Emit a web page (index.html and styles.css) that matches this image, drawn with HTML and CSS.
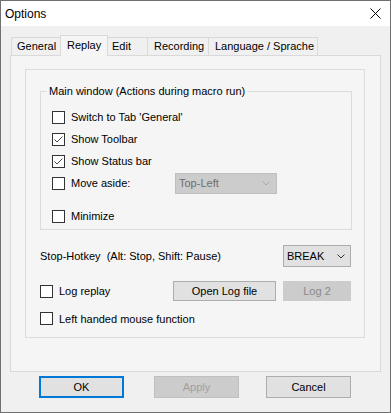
FILE: index.html
```html
<!DOCTYPE html>
<html>
<head>
<meta charset="utf-8">
<title>Options</title>
<link rel="stylesheet" href="styles.css">
</head>
<body>
<div class="window">
  <div class="titlebar">
    <span class="title">Options</span>
    <span class="close"><svg width="11" height="11" viewBox="0 0 11 11"><path d="M0.5 0.5L10.5 10.5M10.5 0.5L0.5 10.5" stroke="#000" stroke-width="1" fill="none"/></svg></span>
  </div>
  <div class="body">
    <div class="tabs">
      <div class="tab t-general">General</div>
      <div class="tab active t-replay">Replay</div>
      <div class="tab t-edit">Edit</div>
      <div class="tab t-rec">Recording</div>
      <div class="tab t-lang">Language / Sprache</div>
    </div>
    <div class="panel">
      <div class="frame">
        <fieldset class="group">
          <legend>Main window (Actions during macro run)</legend>
          <div class="rows">
            <div class="row"><span class="cb"></span><span class="lbl">Switch to Tab 'General'</span></div>
            <div class="row"><span class="cb"><svg width="11" height="11" viewBox="0 0 11 11"><path d="M1.5 5.5L4 8L9.5 2.5" stroke="#4d4d4d" stroke-width="1" fill="none"/></svg></span><span class="lbl">Show Toolbar</span></div>
            <div class="row"><span class="cb"><svg width="11" height="11" viewBox="0 0 11 11"><path d="M1.5 5.5L4 8L9.5 2.5" stroke="#4d4d4d" stroke-width="1" fill="none"/></svg></span><span class="lbl">Show Status bar</span></div>
            <div class="row"><span class="cb"></span><span class="lbl lbl-move">Move aside:</span>
              <div class="combo combo-disabled"><span>Top-Left</span><svg width="8" height="5" viewBox="0 0 8 5"><polyline points="0.5,0.5 4,4 7.5,0.5" stroke="#a8a8a8" fill="none"/></svg></div>
            </div>
            <div class="row row-min"><span class="cb"></span><span class="lbl">Minimize</span></div>
          </div>
        </fieldset>
        <div class="hotkey">
          <span class="lbl">Stop-Hotkey&nbsp; (Alt: Stop, Shift: Pause)</span>
          <div class="combo combo-break"><span>BREAK</span><svg width="8" height="5" viewBox="0 0 8 5"><polyline points="0.5,0.5 4,4 7.5,0.5" stroke="#333" fill="none"/></svg></div>
        </div>
        <div class="logrow">
          <span class="cb"></span><span class="lbl">Log replay</span>
          <div class="logbtns">
            <div class="btn btn-open">Open Log file</div>
            <div class="btn btn-disabled btn-log2">Log 2</div>
          </div>
        </div>
        <div class="lefthand">
          <span class="cb"></span><span class="lbl">Left handed mouse function</span>
        </div>
      </div>
    </div>
    <div class="actions">
      <div class="btn dlg btn-ok">OK</div>
      <div class="btn dlg btn-disabled btn-apply">Apply</div>
      <div class="btn dlg btn-cancel">Cancel</div>
    </div>
  </div>
</div>
</body>
</html>
```
FILE: styles.css
```css
html, body {
  margin: 0;
  padding: 0;
  background: #f0f0f0;
}
body {
  font-family: "Liberation Sans", Arial, sans-serif;
  font-size: 11px;
  color: #000;
}
.window {
  width: 391px;
  height: 413px;
  box-sizing: border-box;
  border: 1px solid #707070;
  background: #f0f0f0;
  display: flex;
  flex-direction: column;
  overflow: hidden;
}
.titlebar {
  height: 25px;
  flex: none;
  background: #fff;
  display: flex;
  align-items: center;
  justify-content: space-between;
  padding: 0 9px 0 4px;
}
.title {
  font-size: 12px;
}
.close {
  display: flex;
}
.body {
  flex: 1;
  display: flex;
  flex-direction: column;
  padding: 9px 9px 0;
}
.tabs {
  height: 20px;
  display: flex;
  align-items: flex-end;
  margin-left: 1px;
  position: relative;
  z-index: 1;
  flex: none;
}
.tab {
  height: 18px;
  box-sizing: border-box;
  border-top: 1px solid #d9d9d9;
  line-height: 17px;
  background: #f0f0f0;
  white-space: nowrap;
}
.tab.active {
  height: 21px;
  margin-bottom: -1px;
  background: #f5f5f5;
  border: 1px solid #d9d9d9;
  border-bottom: none;
  line-height: 18px;
}
.t-general { width: 49px; border-left: 1px solid #d9d9d9; padding-left: 5px; }
.t-replay { width: 48px; padding-left: 6px; }
.t-edit { width: 40px; border-right: 1px solid #d9d9d9; padding-left: 4px; }
.t-rec { width: 61px; border-right: 1px solid #d9d9d9; padding-left: 6px; }
.t-lang { width: 109px; border-right: 1px solid #d9d9d9; padding-left: 6px; }

.panel {
  height: 317px;
  flex: none;
  box-sizing: border-box;
  border: 1px solid #d9d9d9;
  background: #f5f5f5;
  padding: 13px 15px 0 14px;
}
.frame {
  height: 269px;
  box-sizing: border-box;
  border: 1px solid #dcdcdc;
  padding: 0 12px 0 14px;
  display: flex;
  flex-direction: column;
}
.group {
  margin: 15px 0 0;
  padding: 0 0 2px 11px;
  border: 1px solid #dcdcdc;
  min-width: 0;
}
.group legend {
  padding: 0 2px;
  margin-left: -5px;
  line-height: 13px;
}
.rows {
  padding-top: 8px;
}
.row {
  height: 22px;
  display: flex;
  align-items: center;
}
.row-min {
  margin-top: 11px;
}
.cb {
  width: 13px;
  height: 13px;
  box-sizing: border-box;
  border: 1px solid #333;
  background: #fff;
  flex: none;
  margin-right: 6px;
  display: flex;
}
.lbl {
  white-space: nowrap;
}
.lbl-move {
  width: 104px;
}
.combo {
  box-sizing: border-box;
  display: flex;
  align-items: center;
  justify-content: space-between;
}
.combo-disabled {
  width: 102px;
  height: 21px;
  background: #cccccc;
  border: 1px solid #bfbfbf;
  color: #6d6d6d;
  padding: 0 6px 0 3px;
}
.combo-break {
  width: 68px;
  height: 22px;
  background: #e1e1e1;
  border: 1px solid #adadad;
  padding: 0 5px 0 3px;
  margin-right: 1px;
}
.hotkey {
  margin-top: 15px;
  height: 22px;
  display: flex;
  align-items: center;
  justify-content: space-between;
}
.logrow {
  margin-top: 14px;
  height: 20px;
  display: flex;
  align-items: center;
}
.logbtns {
  margin-left: auto;
  margin-right: 1px;
  display: flex;
  gap: 7px;
}
.lefthand {
  margin-top: 11px;
  height: 13px;
  display: flex;
  align-items: center;
}
.btn {
  height: 20px;
  box-sizing: border-box;
  border: 1px solid #adadad;
  background: #e1e1e1;
  display: flex;
  align-items: center;
  justify-content: center;
  white-space: nowrap;
}
.btn-open { width: 103px; }
.btn-log2 { width: 68px; }
.btn-disabled {
  background: #cccccc;
  border-color: #cccccc;
  color: #8a8a8a;
}
.actions {
  display: flex;
  margin-top: 4px;
  padding-left: 29px;
  flex: none;
}
.dlg {
  width: 85px;
  height: 22px;
}
.btn-ok {
  border: 2px solid #0078d7;
}
.btn-apply {
  margin-left: 30px;
  border-color: #bfbfbf;
  color: #a0a0a0;
}
.btn-cancel {
  margin-left: 27px;
}
```
